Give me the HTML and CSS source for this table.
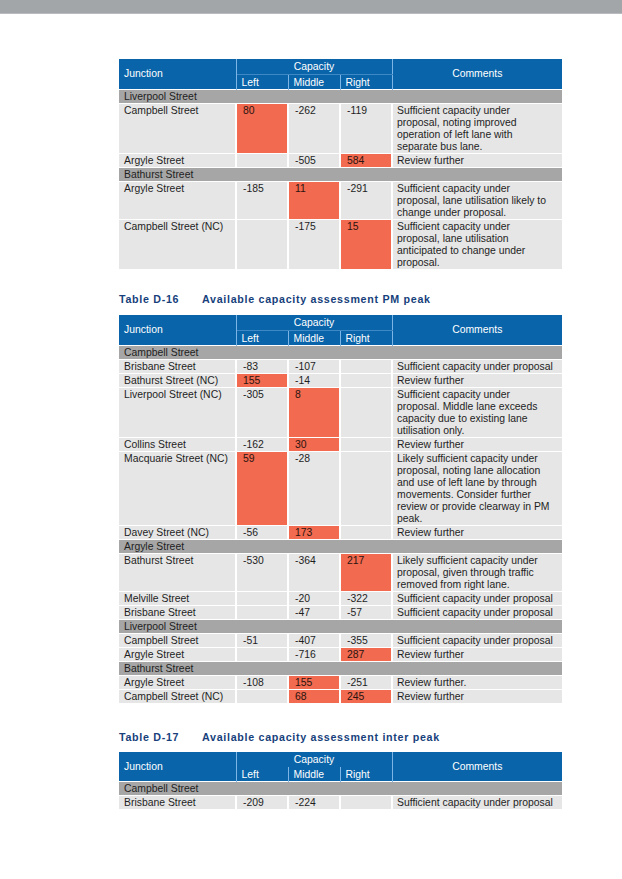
FILE: index.html
```html
<!DOCTYPE html>
<html>
<head>
<meta charset="utf-8">
<link rel="stylesheet" href="styles.css">
</head>
<body>
<div class="topbar"></div>
<div class="page">

<table class="cap t1">
  <colgroup><col class="c-j"><col class="c-n"><col class="c-n"><col class="c-n"><col class="c-c"></colgroup>
  <thead>
    <tr class="h1"><th rowspan="2" class="jh">Junction</th><th colspan="3" class="caph">Capacity</th><th rowspan="2" class="ch">Comments</th></tr>
    <tr class="h2"><th class="sub">Left</th><th class="sub">Middle</th><th class="sub">Right</th></tr>
  </thead>
  <tbody>
    <tr class="grp"><td colspan="5">Liverpool Street</td></tr>
    <tr><td>Campbell Street</td><td class="hot">80</td><td>-262</td><td>-119</td><td>Sufficient capacity under proposal, noting improved operation of left lane with separate bus lane.</td></tr>
    <tr><td>Argyle Street</td><td></td><td>-505</td><td class="hot">584</td><td>Review further</td></tr>
    <tr class="grp"><td colspan="5">Bathurst Street</td></tr>
    <tr><td>Argyle Street</td><td>-185</td><td class="hot">11</td><td>-291</td><td>Sufficient capacity under proposal, lane utilisation likely to change under proposal.</td></tr>
    <tr><td>Campbell Street (NC)</td><td></td><td>-175</td><td class="hot">15</td><td>Sufficient capacity under proposal, lane utilisation anticipated to change under proposal.</td></tr>
  </tbody>
</table>

<div class="caption c16"><span class="num">Table D-16</span><span>Available capacity assessment PM peak</span></div>

<table class="cap">
  <colgroup><col class="c-j"><col class="c-n"><col class="c-n"><col class="c-n"><col class="c-c"></colgroup>
  <thead>
    <tr class="h1"><th rowspan="2" class="jh">Junction</th><th colspan="3" class="caph">Capacity</th><th rowspan="2" class="ch">Comments</th></tr>
    <tr class="h2"><th class="sub">Left</th><th class="sub">Middle</th><th class="sub">Right</th></tr>
  </thead>
  <tbody>
    <tr class="grp"><td colspan="5">Campbell Street</td></tr>
    <tr><td>Brisbane Street</td><td>-83</td><td>-107</td><td></td><td>Sufficient capacity under proposal</td></tr>
    <tr><td>Bathurst Street (NC)</td><td class="hot">155</td><td>-14</td><td></td><td>Review further</td></tr>
    <tr><td>Liverpool Street (NC)</td><td>-305</td><td class="hot">8</td><td></td><td>Sufficient capacity under proposal. Middle lane exceeds capacity due to existing lane utilisation only.</td></tr>
    <tr><td>Collins Street</td><td>-162</td><td class="hot">30</td><td></td><td>Review further</td></tr>
    <tr><td>Macquarie Street (NC)</td><td class="hot">59</td><td>-28</td><td></td><td>Likely sufficient capacity under proposal, noting lane allocation and use of left lane by through movements. Consider further review or provide clearway in PM peak.</td></tr>
    <tr><td>Davey Street (NC)</td><td>-56</td><td class="hot">173</td><td></td><td>Review further</td></tr>
    <tr class="grp"><td colspan="5">Argyle Street</td></tr>
    <tr><td>Bathurst Street</td><td>-530</td><td>-364</td><td class="hot">217</td><td>Likely sufficient capacity under proposal, given through traffic removed from right lane.</td></tr>
    <tr><td>Melville Street</td><td></td><td>-20</td><td>-322</td><td>Sufficient capacity under proposal</td></tr>
    <tr><td>Brisbane Street</td><td></td><td>-47</td><td>-57</td><td>Sufficient capacity under proposal</td></tr>
    <tr class="grp"><td colspan="5">Liverpool Street</td></tr>
    <tr><td>Campbell Street</td><td>-51</td><td>-407</td><td>-355</td><td>Sufficient capacity under proposal</td></tr>
    <tr><td>Argyle Street</td><td></td><td>-716</td><td class="hot">287</td><td>Review further</td></tr>
    <tr class="grp"><td colspan="5">Bathurst Street</td></tr>
    <tr><td>Argyle Street</td><td>-108</td><td class="hot">155</td><td>-251</td><td>Review further.</td></tr>
    <tr><td>Campbell Street (NC)</td><td></td><td class="hot">68</td><td class="hot">245</td><td>Review further</td></tr>
  </tbody>
</table>

<div class="caption c17"><span class="num">Table D-17</span><span>Available capacity assessment inter peak</span></div>

<table class="cap t3">
  <colgroup><col class="c-j"><col class="c-n"><col class="c-n"><col class="c-n"><col class="c-c"></colgroup>
  <thead>
    <tr class="h1"><th rowspan="2" class="jh">Junction</th><th colspan="3" class="caph">Capacity</th><th rowspan="2" class="ch">Comments</th></tr>
    <tr class="h2"><th class="sub">Left</th><th class="sub">Middle</th><th class="sub">Right</th></tr>
  </thead>
  <tbody>
    <tr class="grp"><td colspan="5">Campbell Street</td></tr>
    <tr><td>Brisbane Street</td><td>-209</td><td>-224</td><td></td><td>Sufficient capacity under proposal</td></tr>
  </tbody>
</table>

</div>
</body>
</html>
```
FILE: styles.css
```css
html, body {
  margin: 0;
  padding: 0;
  background: #ffffff;
}
body {
  font-family: "Liberation Sans", Arial, sans-serif;
  color: #1e1e1e;
}
.topbar {
  height: 13px;
  background: #a3a6a9;
  border-bottom: 1px solid #b8bcc1;
}
.page {
  padding: 45px 0 0 119px;
}
.cap {
  width: 443px;
  table-layout: fixed;
  border-collapse: collapse;
  font-size: 10.4px;
  line-height: 12px;
}
.c-j { width: 117px; }
.c-n { width: 52px; }
.c-c { width: 170px; }

.cap th {
  background: #0964a9;
  color: #ffffff;
  font-weight: normal;
  text-align: left;
  padding: 0 5px;
  border-left: 1px solid #7db6e6;
  border-right: 1px solid #7db6e6;
}
.cap th.jh { border-left: none; vertical-align: middle; padding-top: 0; }
.cap th.ch { border-right: none; text-align: center; vertical-align: middle; }
.cap th.caph {
  text-align: center;
  height: 14px;
  padding-top: 1px;
  border-bottom: 1px solid #3f88c6;
}
.cap th.sub {
  height: 13px;
  padding-top: 1px;
  vertical-align: bottom;
}
.t3 th.caph { border-bottom: none; }
.t3 th.sub { border-top: none; }

.cap td {
  background: #e6e6e6;
  vertical-align: top;
  padding: 1px 5px 0 6px;
  border: 1px solid #ffffff;
  border-left-width: 2px;
  border-right-width: 2px;
}
.cap td:first-child { border-left: none; padding-left: 5px; }
.cap td:last-child { border-right: none; padding-left: 4px; padding-right: 7px; }
.cap tbody tr:last-child td { border-bottom: none; }
.cap tr.grp td {
  background: #a6a6a6;
  border-left: none;
  border-right: none;
  padding-left: 5px;
}
.cap td.hot {
  background: #f26a4f;
  color: #2a1410;
}

.caption {
  display: flex;
  color: #173f7c;
  font-weight: bold;
  font-size: 10.7px;
  letter-spacing: 0.7px;
  line-height: 14px;
}
.caption .num { width: 83px; }
.c16 { margin: 23px 0 9px; }
.c17 { margin: 27px 0 8px; }
```
